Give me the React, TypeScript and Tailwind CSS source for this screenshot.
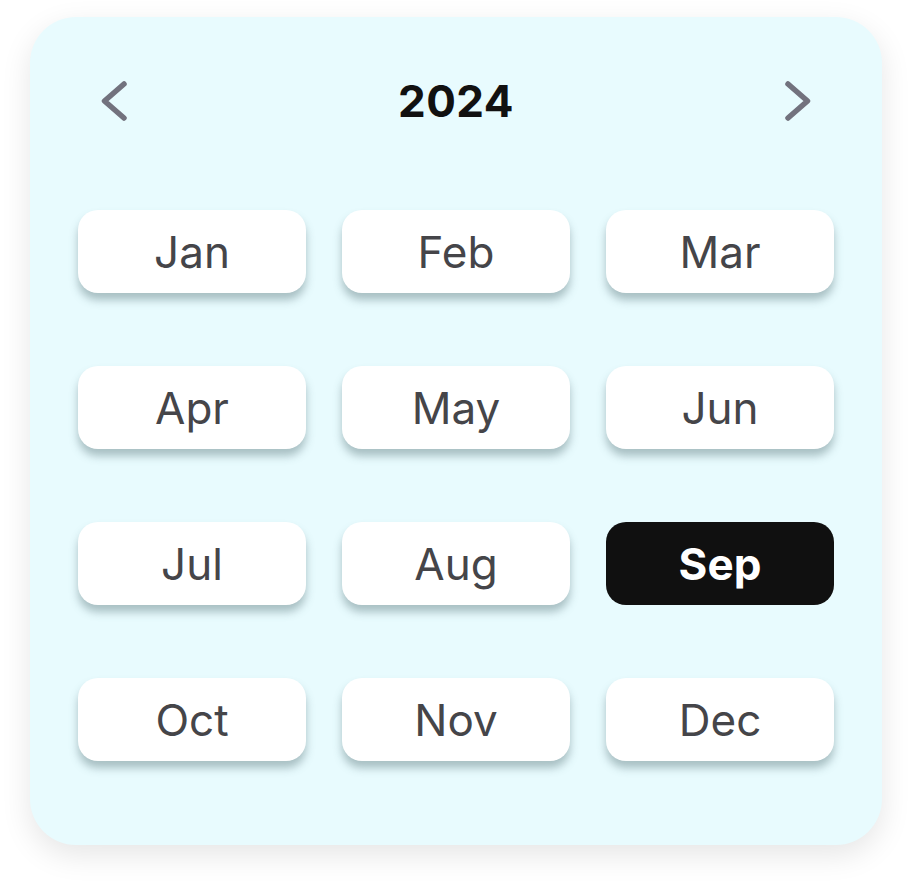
const MONTHS = ['Jan', 'Feb', 'Mar', 'Apr', 'May', 'Jun', 'Jul', 'Aug', 'Sep', 'Oct', 'Nov', 'Dec']

function Chevron({ dir }: { dir: 'left' | 'right' }) {
  return (
    <svg width="28" height="44" viewBox="0 0 28 44" fill="none" stroke="currentColor" strokeWidth="5.5" strokeLinecap="round" strokeLinejoin="round">
      <path d={dir === 'left' ? 'M24 5 L4.5 22 L24 39' : 'M4 5 L23.5 22 L4 39'} />
    </svg>
  )
}

export default function App() {
  const selected = 'Sep'

  return (
    <div className="min-h-[888px] bg-white pt-[17px] pl-[30px]" style={{ fontFamily: 'Inter, "Noto Sans", sans-serif' }}>
      <div className="w-[852px] h-[828px] rounded-[46px] bg-[#e8fbfe] shadow-[0_10px_30px_rgba(0,0,0,0.10)] px-[48px] pt-[62px]">
        {/* Year header */}
        <div className="flex items-center justify-between h-[44px] px-[22px]">
          <button className="text-[#72727e]">
            <Chevron dir="left" />
          </button>
          <h2 className="text-[44px] font-bold text-[#111] tracking-[0.01em]">2024</h2>
          <button className="text-[#72727e]">
            <Chevron dir="right" />
          </button>
        </div>

        {/* Month grid */}
        <div className="grid grid-cols-3 gap-x-[36px] gap-y-[73px] mt-[87px]">
          {MONTHS.map((m) =>
            m === selected ? (
              <button
                key={m}
                className="h-[83px] rounded-[20px] bg-[#101010] text-white text-[44px] font-bold"
              >
                {m}
              </button>
            ) : (
              <button
                key={m}
                className="h-[83px] rounded-[20px] bg-white text-[#454549] text-[44px] shadow-[0_7px_8px_rgba(90,120,125,0.45)]"
              >
                {m}
              </button>
            )
          )}
        </div>
      </div>
    </div>
  )
}
